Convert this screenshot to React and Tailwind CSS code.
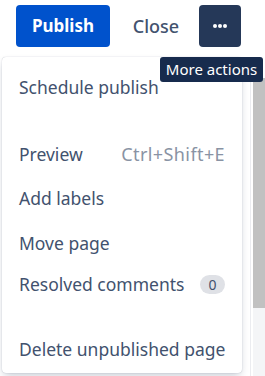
import { useState } from "react";

const font = { fontFamily: '"Noto Sans", "Open Sans", "Liberation Sans", sans-serif' };

function MenuItem({ label, right, className = "h-[44px]" }) {
  return (
    <div className={`flex items-center justify-between whitespace-nowrap px-[17px] text-[17.5px] text-[#42526E] ${className}`}>
      <span>{label}</span>
      {right}
    </div>
  );
}

export default function App() {
  const [open] = useState(true);

  return (
    <div className="relative h-[376px] w-[265px] overflow-hidden bg-white" style={font}>
      <div className="flex items-center pl-[16px] pt-[5px]">
        <button className="h-[42px] w-[94px] rounded-[4px] bg-[#0052CC] text-[17px] font-bold text-white">
          Publish
        </button>
        <button className="ml-[4px] h-[42px] w-[84px] text-[18px] font-medium text-[#42526E]">Close</button>
        <button className="ml-[1px] flex h-[42px] w-[42px] items-center justify-center gap-[1px] rounded-[4px] bg-[#253858]">
          <span className="h-[4px] w-[4px] rounded-full bg-white" />
          <span className="h-[4px] w-[4px] rounded-full bg-white" />
          <span className="h-[4px] w-[4px] rounded-full bg-white" />
        </button>
      </div>

      {/* page behind the menu */}
      <div className="mt-[31px] flex h-[298px]">
        <div className="flex-1" />
        <div className="w-px bg-[#EBECF0]" />
        <div className="ml-[2px] flex w-[12px] flex-col">
          <div className="h-[230px] bg-[#C1C1C1]" />
          <div className="flex-1 bg-[#F4F5F7]" />
        </div>
      </div>

      {open && (
        <div className="absolute left-[2px] top-[57px] h-[316px] w-[240px] rounded-[4px] bg-white pt-[8px] shadow-[0_4px_8px_-2px_rgba(9,30,66,0.25),0_0_1px_rgba(9,30,66,0.31)]">
          <MenuItem label="Schedule publish" />
          <MenuItem
            label="Preview"
            className="mt-[23px] h-[44px]"
            right={<span className="text-[18px] tracking-[0.4px] text-[#8993A4]">Ctrl+Shift+E</span>}
          />
          <MenuItem label="Add labels" />
          <MenuItem label="Move page" className="h-[46px]" />
          <MenuItem
            label="Resolved comments"
            className="h-[36px]"
            right={
              <span className="flex h-[19px] w-[25px] items-center justify-center rounded-full bg-[#DFE1E6] text-[14px] text-[#42526E]">
                0
              </span>
            }
          />
          <MenuItem label="Delete unpublished page" className="mt-[25px] h-[44px]" />
        </div>
      )}

      <div className="absolute left-[160px] top-[57px] flex h-[25px] w-[103px] items-center justify-center rounded-[3px] bg-[#172B4D] text-[15px] text-white">
        More actions
      </div>
    </div>
  );
}
